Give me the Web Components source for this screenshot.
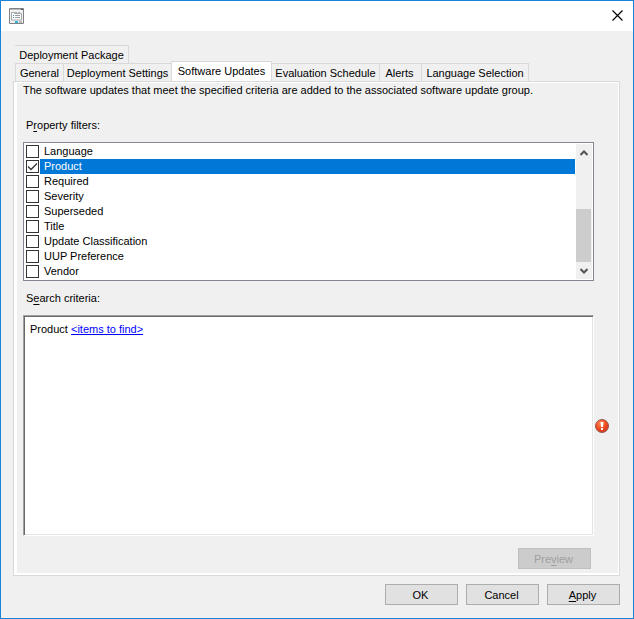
<!DOCTYPE html>
<html lang="en">
<head>
<meta charset="utf-8">
<title>Software Updates</title>
<style>
html, body { height: 100%; }
body { margin: 0; font: 11px/15px "Liberation Sans", Arial, sans-serif; color: #000; background: #f0f0f0; }
</style>
</head>
<body>
<dialog-window>
  <tab-strip slot="tabs"></tab-strip>
  <updates-page slot="page"></updates-page>
  <push-button slot="actions">OK</push-button>
  <push-button slot="actions">Cancel</push-button>
  <push-button slot="actions"><u>A</u>pply</push-button>
</dialog-window>
<script>
class Base extends HTMLElement {
  constructor() {
    super();
    this.attachShadow({ mode: "open" }).innerHTML =
      "<style>*{box-sizing:border-box}:host{box-sizing:border-box}</style>" + this.view();
  }
}

customElements.define("push-button", class extends Base {
  view() {
    return `<style>
      :host { display: block; }
      button { display: block; width: 73px; height: 21px; padding: 1px 2px 0 0; font: inherit; color: #000;
        background: #e1e1e1; border: 1px solid #adadad; border-radius: 0; }
      button:disabled { color: #a0a0a0; background: #ccc; border-color: #bfbfbf; }
      ::slotted(u) { text-underline-offset: 2px; }
    </style><button type="button"><slot></slot></button>`;
  }
  connectedCallback() {
    this.shadowRoot.querySelector("button").disabled = this.hasAttribute("disabled");
  }
});

customElements.define("dialog-window", class extends Base {
  view() {
    return `<style>
      :host { display: flex; flex-direction: column; min-height: 100%; border: 1px solid #1883d7; background: #f0f0f0; }
      header { display: flex; justify-content: space-between; align-items: center; height: 30px;
        padding: 0 10px 1px 8px; background: #fff; }
      header svg { display: block; }
      header button { padding: 0; border: 0; background: none; }
      main { flex: 1; display: flex; flex-direction: column; padding: 14px 13px 0 12px; }
      ::slotted([slot=page]) { flex: 1; }
      footer { display: flex; justify-content: flex-end; gap: 8px; padding: 8px 13px 13px; }
    </style>
    <header>
      <svg width="16" height="16" viewBox="0 0 16 16" role="img" aria-label="Properties">
        <path d="M.5.5h14v15H.5z" fill="#f2f2f0" stroke="#808184"/>
        <path d="M1 1.500h13" stroke="#b9bbbd"/><path d="M12 1.500h2" stroke="#55585c"/>
        <path d="M2.500 4.500h3v1h7v6.500h-10z" fill="#fff" stroke="#a4a8ad"/>
        <path d="M6 4.500h2M9 4.500h2" stroke="#a4a8ad"/>
        <path d="M4 7.500h1M4 9.500h1" stroke="#3c85ab"/>
        <path d="M6 7.500h5M6 9.500h5" stroke="#999da2"/>
        <path d="M6 14h3" stroke="#37b4dd" stroke-width="2"/><path d="M10 14h3" stroke="#b5b7b9" stroke-width="2"/>
      </svg>
      <button type="button" aria-label="Close"><svg width="11" height="11" viewBox="0 0 11 11">
        <path d="M.5.5l10 10M10.500.5l-10 10" stroke="#000" stroke-width="1.200"/></svg></button>
    </header>
    <main><slot name="tabs"></slot><slot name="page"></slot></main>
    <footer><slot name="actions"></slot></footer>`;
  }
});

customElements.define("tab-strip", class extends Base {
  view() {
    return `<style>
      :host { display: block; padding-left: 2px; }
      div { display: flex; align-items: flex-end; }
      button { height: 18px; padding: 2px 0 0; font: inherit; line-height: 15px; color: #000; text-align: center;
        background: #f0f0f0; border: solid #d9d9d9; border-width: 1px 1px 0 0; white-space: nowrap; }
      button[aria-selected=true] { height: 20px; padding-bottom: 3px; background: #fff; border-left-width: 1px; margin-left: -1px; }
      .package { width: 114px; }
      .general { width: 49px; border-left-width: 1px; }
      .settings { width: 108px; }
      .updates { width: 101px; }
      .schedule { width: 108px; }
      .alerts { width: 42px; padding-right: 2px; }
      .language { width: 107px; }
      nav { display: flex; flex-direction: column; }
      .front { height: 18px; }
    </style>
    <nav role="tablist">
      <div><button type="button" role="tab" class="package">Deployment Package</button></div>
      <div class="front">
        <button type="button" role="tab" class="general">General</button>
        <button type="button" role="tab" class="settings">Deployment Settings</button>
        <button type="button" role="tab" class="updates" aria-selected="true">Software Updates</button>
        <button type="button" role="tab" class="schedule">Evaluation Schedule</button>
        <button type="button" role="tab" class="alerts">Alerts</button>
        <button type="button" role="tab" class="language">Language Selection</button>
      </div>
    </nav>`;
  }
});

customElements.define("filter-item", class extends Base {
  view() {
    return `<style>
      :host { display: block; }
      label { display: grid; grid-template-columns: 13px 1fr; column-gap: 1px; height: 15px; align-items: center; }
      input { grid-area: 1 / 1; appearance: none; width: 13px; height: 13px; margin: 0; border: 1px solid #333; background: #fff; }
      svg { grid-area: 1 / 1; display: none; pointer-events: none; z-index: 1; }
      input:checked + svg { display: block; }
      span { grid-area: 1 / 2; padding-left: 4px; line-height: 15px; }
      :host([selected]) span { background: #0078d7; color: #fff; }
    </style>
    <label><input type="checkbox"><svg width="13" height="13" viewBox="0 0 13 13">
      <path d="M2 6.500l3 3L11 3.500" fill="none" stroke="#333" stroke-width="1.300"/></svg><span><slot></slot></span></label>`;
  }
  connectedCallback() {
    this.shadowRoot.querySelector("input").checked = this.hasAttribute("checked");
  }
});

customElements.define("scroll-bar", class extends Base {
  view() {
    return `<style>
      :host { display: flex; flex-direction: column; width: 16px; background: #f0f0f0; }
      button { display: grid; place-items: center; height: 17px; padding: 0 1px 0 0; border: 0; background: none; }
      .space { flex: 1; }
      .thumb { height: 53px; margin-right: 1px; background: #cdcdcd; }
    </style>
    <button type="button" aria-label="Scroll up"><svg width="8" height="6" viewBox="0 0 8 6"><path d="M.5 5L4 1.500 7.500 5" fill="none" stroke="#555" stroke-width="2"/></svg></button>
    <div class="space"></div><div class="thumb"></div>
    <button type="button" aria-label="Scroll down"><svg width="8" height="6" viewBox="0 0 8 6"><path d="M.5 1L4 4.500 7.500 1" fill="none" stroke="#555" stroke-width="2"/></svg></button>`;
  }
});

customElements.define("error-mark", class extends Base {
  view() {
    return `<style>:host { display: block; width: 14px; } svg { display: block; }</style>
    <svg width="14" height="14" viewBox="0 0 14 14" role="img" aria-label="Error">
      <defs><radialGradient id="g" cx=".4" cy=".3" r=".8"><stop offset="0" stop-color="#ff8a60"/>
      <stop offset=".5" stop-color="#f04e22"/><stop offset="1" stop-color="#c8321a"/></radialGradient></defs>
      <circle cx="7" cy="7" r="6.500" fill="url(#g)" stroke="#9a5a4c"/>
      <path d="M5.500 3h3L8 8H6zM6 9h2v2H6z" fill="#fff"/>
    </svg>`;
  }
});

customElements.define("updates-page", class extends Base {
  view() {
    return `<style>
      :host { display: flex; border: 1px solid #d9d9d9; background: #fff; padding: 1px 1px 2px 3px; }
      section { flex: 1; display: flex; flex-direction: column; padding: 0 9px 4px 6px; background: #f0f0f0; }
      p { margin: 0; }
      h2 { margin: 0; padding-left: 3px; font: inherit; }
      u { text-underline-offset: 2px; }
      .filters-title { margin: 20px 0 9px; }
      .criteria-title { margin: 10px 0 9px; }
      .row { display: grid; grid-template-columns: 1fr 14px; column-gap: 1px; align-items: center; }
      .list { display: flex; border: 1px solid #828790; background: #fff; padding: 1px 1px 1px 2px; }
      .items { flex: 1; margin-right: 1px; }
      .criteria-row { flex: 1; }
      .criteria { align-self: stretch; background: #fff; padding: 6px;
        border: 1px solid; border-color: #a0a0a0 #fff #fff #a0a0a0; box-shadow: inset 1px 1px #696969, inset -1px -1px #e3e3e3; }
      a { color: #00f; text-underline-offset: 1px; }
      push-button { align-self: flex-end; margin: 12px 18px 0 0; }
    </style>
    <section>
      <p>The software updates that meet the specified criteria are added to the associated software update group.</p>
      <h2 class="filters-title" id="filters">P<u>r</u>operty filters:</h2>
      <div class="row">
        <div class="list" role="group" aria-labelledby="filters">
          <div class="items">
            <filter-item>Language</filter-item>
            <filter-item checked selected>Product</filter-item>
            <filter-item>Required</filter-item>
            <filter-item>Severity</filter-item>
            <filter-item>Superseded</filter-item>
            <filter-item>Title</filter-item>
            <filter-item>Update Classification</filter-item>
            <filter-item>UUP Preference</filter-item>
            <filter-item>Vendor</filter-item>
          </div>
          <scroll-bar></scroll-bar>
        </div>
      </div>
      <h2 class="criteria-title" id="criteria">S<u>e</u>arch criteria:</h2>
      <div class="row criteria-row">
        <div class="criteria" role="group" aria-labelledby="criteria">Product <a href="#items">&lt;items to find&gt;</a></div>
        <error-mark></error-mark>
      </div>
      <push-button disabled>Pre<u>v</u>iew</push-button>
    </section>`;
  }
});
</script>
</body>
</html>
